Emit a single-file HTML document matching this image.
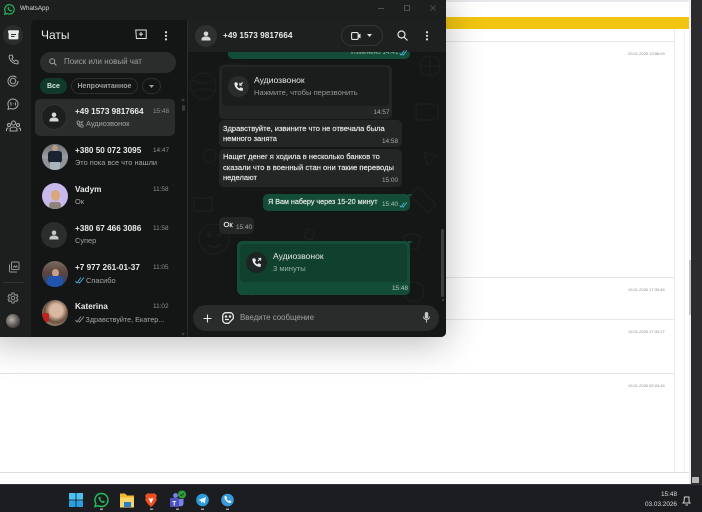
<!DOCTYPE html>
<html lang="ru"><head><meta charset="utf-8"><title>WhatsApp</title>
<style>
*{box-sizing:border-box}
html,body{margin:0;padding:0;width:702px;height:512px;overflow:hidden;background:#fff;font-family:"Liberation Sans","Noto Sans CJK SC",sans-serif}
.a{position:absolute}
.t{position:absolute;white-space:nowrap;line-height:1}
svg{position:absolute;overflow:visible}
.name{font-size:8.2px;font-weight:bold;color:#e9eaea}
.time{font-size:6.4px;color:#8f9292}
.sub{font-size:7.4px;color:#a3a6a6}
.msg{font-size:7.5px;color:#eceded;-webkit-text-stroke:.15px #eceded}
.bub{position:absolute;background:#242525;border-radius:5px}
.out{position:absolute;background:#144d37;border-radius:5px}
.av{position:absolute;width:26px;height:26px;border-radius:50%;overflow:hidden}
</style></head><body>

<!-- background page -->
<div class="a" style="left:0;top:0;width:702px;height:512px;background:#fff"></div>
<div class="a" style="left:440px;top:0;width:250px;height:2px;background:#e8e8ec"></div>
<div class="a" style="left:440px;top:17px;width:249px;height:12px;background:#f1c512"></div>
<div class="a" style="left:440px;top:41px;width:234px;height:1px;background:#e4e4ea"></div>
<div class="a" style="left:674px;top:29px;width:1px;height:443px;background:#ececf0"></div>
<div class="a" style="left:684px;top:29px;width:1px;height:443px;background:#f0f0f3"></div>
<div class="t" style="left:628px;top:52px;font-size:4px;color:#8a8a92">20.01.2026 13:58:09</div>
<div class="a" style="left:440px;top:277px;width:234px;height:1px;background:#e4e4ea"></div>
<div class="t" style="left:628px;top:288px;font-size:4px;color:#8a8a92">19.01.2026 17:30:45</div>
<div class="a" style="left:440px;top:319px;width:234px;height:1px;background:#e8e8ec"></div>
<div class="t" style="left:628px;top:330px;font-size:4px;color:#8a8a92">19.01.2026 17:30:27</div>
<div class="a" style="left:0;top:373px;width:674px;height:1px;background:#e4e4ea"></div>
<div class="t" style="left:628px;top:384px;font-size:4px;color:#8a8a92">19.01.2026 09:24:34</div>
<div class="a" style="left:0;top:472px;width:690px;height:1px;background:#dedee0"></div>
<div class="a" style="left:688.500px;top:0;width:2px;height:484px;background:#f0f0f2"></div>
<div class="a" style="left:688.500px;top:260px;width:2px;height:55px;background:#c4c4cc"></div>
<div class="a" style="left:690.500px;top:0;width:11.500px;height:484px;background:#2c2c2e"></div>

<!-- taskbar -->
<div class="a" style="left:0;top:484px;width:702px;height:28px;background:#1b1d20"></div>
<div class="a" style="left:0;top:484px;width:702px;height:1px;background:#333437"></div>
<svg style="left:0;top:484px" width="702" height="28" viewBox="0 484 702 28">
 <!-- windows -->
 <rect x="69" y="493" width="6.600" height="6.600" rx=".6" fill="#4cc2f2"/><rect x="76.400" y="493" width="6.600" height="6.600" rx=".6" fill="#4cc2f2"/><rect x="69" y="500.400" width="6.600" height="6.600" rx=".6" fill="#2a9fe0"/><rect x="76.400" y="500.400" width="6.600" height="6.600" rx=".6" fill="#2a9fe0"/>
 <!-- whatsapp -->
 <path d="M101.500 493.500a6.500 6.500 0 0 1 0 13 6.800 6.800 0 0 1-3.200-.8l-3.300.9.900-3.200a6.500 6.500 0 0 1 5.600-9.900z" fill="none" stroke="#25c15f" stroke-width="1.400"/>
 <path d="M99 497c-.8.8-.6 2.100.6 3.600 1.300 1.600 2.800 2.500 4 2.300.8-.2 1.400-.9 1.300-1.400l-1.700-.9-.8.8c-.9-.4-1.700-1.300-2.200-2.300l.7-.7-.7-1.700z" fill="#25c15f"/>
 <!-- folder -->
 <path d="M120 493.500h5l2 2h7v12h-14z" fill="#f2b92f"/><rect x="120" y="497.500" width="14" height="10" fill="#f8d568"/><rect x="124" y="502" width="7" height="5" fill="#2a80c8"/>
 <!-- brave -->
 <path d="M147 493.500h8l1.800 2-.6 2.500.6 2-3 4.500-2.800 2.500-2.800-2.500-3-4.500.6-2-.6-2.500z" fill="#f04f23"/>
 <path d="M148.500 498l2.500.8 2.500-.8-1 2.500-1.500 3-1.500-3z" fill="#fff"/>
 <!-- teams -->
 <circle cx="175.500" cy="495.500" r="2.400" fill="#7b83eb"/><rect x="170" y="498" width="9" height="9" rx="1" fill="#4b53bc"/><path d="M179 499h4.500v4.500a3 3 0 0 1-4.500 2.500z" fill="#7b83eb"/><text x="172.200" y="505.500" font-size="6.500" font-weight="bold" fill="#fff" font-family="Liberation Sans">T</text>
 <circle cx="182" cy="494.500" r="4" fill="#2f9e3f"/><path d="M180.300 494.500l1.200 1.200 2.200-2.200" stroke="#0e3a16" fill="none" stroke-width=".9"/>
 <!-- telegram -->
 <circle cx="202.500" cy="500" r="6.300" fill="#2b9ad8"/><path d="M198.500 500l7.500-3-1.200 6.500-2.300-1.600-1.200 1.200-.3-2z" fill="#e8f5fc"/>
 <!-- phone -->
 <circle cx="227.500" cy="500" r="6.300" fill="#3a9ae0"/><path d="M224.800 496.300c-.9 1.200.1 3.400 1.500 4.800 1.500 1.500 3.500 2.400 4.700 1.400l.4-.9-1.900-1.300-.9.700c-.9-.4-1.800-1.300-2.200-2.200l.7-.9-1.200-1.900z" fill="#fff"/>
 <!-- indicators -->
 <g fill="#9b9c9e"><rect x="100" y="508.500" width="3" height="1.500"/><rect x="150" y="508.500" width="3" height="1.500"/><rect x="176" y="508.500" width="3" height="1.500"/><rect x="201" y="508.500" width="3" height="1.500"/><rect x="226" y="508.500" width="3" height="1.500"/></g>
 <!-- notification -->
 <path d="M684.500 497h4.500v4.500l1 1.500h-7l1-1.500z" fill="none" stroke="#d0d0d0" stroke-width="1"/><path d="M685.500 505h2.500" stroke="#d0d0d0"/>
</svg>
<div class="t" style="right:25px;top:492.300px;font-size:6.400px;color:#dcdcdc">15:48</div>
<div class="t" style="right:25px;top:501.500px;font-size:6.400px;color:#dcdcdc">03.03.2026</div>
<div class="a" style="left:692px;top:477px;width:7px;height:6px;background:#b8b8b8"></div>

<!-- WhatsApp window -->
<div class="a" style="left:-10px;top:-10px;width:456px;height:347px;border-radius:0 0 6px 0;box-shadow:0 6px 36px rgba(0,0,0,.28)"></div>
<div class="a" style="left:0;top:0;width:446px;height:337px;background:#1d1f1f;border-radius:0 0 5px 0;overflow:hidden">
 <!-- list pane -->
 <div class="a" style="left:31px;top:20px;width:156px;height:317px;background:#141515;border-radius:5px 0 0 0"></div>
 <!-- chat pane -->
 <div class="a" style="left:187px;top:20px;width:259px;height:317px;background:#151616"></div>
 <div class="a" style="left:187px;top:20px;width:259px;height:32px;background:#1e2020"></div>
 <div class="a" style="left:187px;top:20px;width:1px;height:317px;background:#292b2b"></div>

 <!-- wallpaper doodles -->
 <svg style="left:188px;top:52px" width="258" height="285" viewBox="0 0 258 285" fill="none" stroke="#1f2121" stroke-width="1">
  <circle cx="15" cy="34" r="13"/><path d="M4 28c8 4 16 4 22 0M4 40c8-4 16-4 22 0"/>
  <circle cx="242" cy="14" r="10"/><path d="M232 14h20M242 4v20"/>
  <rect x="228" y="52" width="22" height="16" rx="3"/>
  <circle cx="26" cy="187" r="15"/><circle cx="21" cy="183" r="1.500"/><circle cx="31" cy="183" r="1.500"/><path d="M19 192c4 4 10 4 14 0"/>
  <path d="M230 135l18 18-8 8-18-18z"/><path d="M10 255h25v20h-25zM22 255v20"/>
  <circle cx="226" cy="240" r="10"/><path d="M190 120l6 12-12-2z"/><path d="M18 100c6-6 14 0 8 8-6 6-14 0-8-8z"/>
  <path d="M6 145c6 2 12 2 18 0v14h-18z"/><path d="M236 100l12 4-8 10z"/><path d="M60 228l10 6-6 10-10-6z"/>
  <path d="M120 176l6 4-2 8-8-2z"/><circle cx="100" cy="212" r="8"/><path d="M190 216c8-4 14 2 10 10"/>
  <circle cx="50" cy="128" r="7"/><path d="M34 70l8 8-8 8"/><path d="M40 12h14v10h-14z"/>
  <path d="M215 185c6-4 12-4 18 0l-4 12h-10z"/>
 </svg>

 <!-- title bar -->
 <svg style="left:4px;top:4px" width="11" height="11" viewBox="0 0 24 24"><path d="M12 1.500a10.300 10.300 0 0 1 0 20.600 10.500 10.500 0 0 1-5-1.300l-5.500 1.500 1.500-5.300a10.300 10.300 0 0 1 9-15.500z" fill="none" stroke="#25c15f" stroke-width="2.400"/><path d="M8.500 6.800c-1.300 1.300-1 3.600 1 6 2 2.400 4.600 3.800 6.300 3.300 1.100-.3 1.800-1.300 1.700-2.100l-2.500-1.400-1.100 1.100c-1.300-.6-2.600-1.900-3.300-3.300l1-1.100-1.100-2.500z" fill="#25c15f"/></svg>
 <div class="t" style="left:20px;top:6px;font-size:6.300px;color:#dcdede">WhatsApp</div>
 <div class="a" style="left:378px;top:7.500px;width:6px;height:1px;background:#4e5050"></div>
 <div class="a" style="left:404px;top:5px;width:6px;height:6px;border:1px solid #4e5050"></div>
 <svg style="left:430px;top:5px" width="6" height="6" viewBox="0 0 7 7"><path d="M.5.500l6 6M6.500.500l-6 6" stroke="#4e5050"/></svg>

 <!-- rail -->
 <div class="a" style="left:3px;top:25px;width:20px;height:20px;border-radius:50%;background:#2b2d2d"></div>
 <svg style="left:8px;top:30px" width="11" height="10" viewBox="0 0 11 10"><path d="M0 1.500a1.200 1.200 0 0 1 1.200-1.200h8.600a1.200 1.200 0 0 1 1.200 1.200v1.300h-.6v5.400a1.200 1.200 0 0 1-1.200 1.200h-7.400a1.200 1.200 0 0 1-1.200-1.200v-5.400h-.6z" fill="#e8e9e9"/><path d="M3 4.500h5M3 6.500h3.500" stroke="#2b2d2d"/></svg>
 <svg style="left:8px;top:54px" width="11" height="11" viewBox="0 0 24 24"><path d="M5 2.500l4 0 2 5.500-2.500 2.500c1 2.500 3 4.500 5.500 5.500l2.500-2.500 5.500 2v4c0 1.500-1 2-2 2C10.500 21.500 2.500 13.500 2.500 5c0-1.500 1-2.500 2.500-2.500z" fill="none" stroke="#a5a8a8" stroke-width="2.200"/></svg>
 <svg style="left:7px;top:75px" width="12" height="12" viewBox="0 0 24 24" fill="none" stroke="#a5a8a8" stroke-width="2"><circle cx="12" cy="12" r="5.500"/><path d="M22 12a10 10 0 1 1-3-7"/></svg>
 <svg style="left:7px;top:98px" width="12" height="12" viewBox="0 0 24 24" fill="none" stroke="#a5a8a8" stroke-width="2"><path d="M12 2a10 10 0 0 1 0 20 10 10 0 0 1-4.500-1l-5.500 1.500 1.500-5a10 10 0 0 1 8.500-15.500z"/><path d="M8 9l-1.500 1.500M8 9v6M17 9v6M12 11.500h1"/></svg>
 <svg style="left:6px;top:120px" width="15" height="12" viewBox="0 0 30 24" fill="none" stroke="#a5a8a8" stroke-width="2.200"><circle cx="15" cy="6" r="4"/><circle cx="6" cy="10" r="3"/><circle cx="24" cy="10" r="3"/><path d="M8 22v-3c0-3 3-5 7-5s7 2 7 5v3zM1 22v-3c0-2 2-3 4-3M29 22v-3c0-2-2-3-4-3"/></svg>
 <svg style="left:8px;top:261px" width="12" height="12" viewBox="0 0 24 24" fill="none" stroke="#929595" stroke-width="2"><rect x="7" y="2" width="15" height="15" rx="2"/><path d="M3 7v13a2 2 0 0 0 2 2h13"/><path d="M10 13l3-3 2 2 2-2 2 3"/></svg>
 <div class="a" style="left:3px;top:282px;width:21px;height:1px;background:#333535"></div>
 <svg style="left:7px;top:292px" width="12" height="12" viewBox="0 0 24 24" fill="none" stroke="#929595" stroke-width="2"><circle cx="12" cy="12" r="3.500"/><path d="M10 2h4l.6 3 2.400 1.300 2.900-1 2 3.500-2.300 2v2.400l2.300 2-2 3.500-2.900-1-2.400 1.300-.6 3h-4l-.6-3-2.400-1.300-2.900 1-2-3.500 2.300-2v-2.400l-2.300-2 2-3.500 2.900 1 2.400-1.300z"/></svg>
 <div class="a" style="left:6px;top:314px;width:14px;height:14px;border-radius:50%;background:radial-gradient(circle at 40% 40%,#b9b4b0,#5b5552 55%,#2a2829)"></div>

 <!-- list header -->
 <div class="t" style="left:41px;top:29px;font-size:12px;color:#e9eaea">Чаты</div>
 <svg style="left:135px;top:29px" width="12" height="11" viewBox="0 0 12 11" fill="none" stroke="#e3e4e4" stroke-width="1"><path d="M.800 1h10.400v8.500h-9.800z"/><path d="M6 3v4.200M3.900 5.100h4.200"/></svg>
 <svg style="left:164px;top:31px" width="4" height="10" viewBox="0 0 4 10" fill="#e3e4e4"><circle cx="2" cy="1.200" r="1.100"/><circle cx="2" cy="4.800" r="1.100"/><circle cx="2" cy="8.400" r="1.100"/></svg>
 <!-- search -->
 <div class="a" style="left:40px;top:52px;width:136px;height:21px;border-radius:11px;background:#2b2d2d"></div>
 <svg style="left:49px;top:58px" width="8" height="8" viewBox="0 0 8 8" fill="none" stroke="#9fa2a2" stroke-width="1"><circle cx="3.200" cy="3.200" r="2.500"/><path d="M5 5l2.500 2.500"/></svg>
 <div class="t" style="left:64px;top:58px;font-size:8px;color:#9da0a0">Поиск или новый чат</div>
 <!-- filters -->
 <div class="a" style="left:40px;top:78px;width:27px;height:16px;border-radius:8px;background:#123a2c"></div>
 <div class="t" style="left:47px;top:82.500px;font-size:7px;font-weight:bold;color:#cfeadb">Все</div>
 <div class="a" style="left:71px;top:78px;width:67px;height:16px;border-radius:8px;border:1px solid #2d2f2f"></div>
 <div class="t" style="left:77.500px;top:82.500px;font-size:7px;font-weight:bold;color:#9da0a0">Непрочитанное</div>
 <div class="a" style="left:142px;top:78px;width:19px;height:16px;border-radius:8px;border:1px solid #2d2f2f"></div>
 <svg style="left:149px;top:85px" width="5" height="3" viewBox="0 0 5 3"><path d="M0 0h5l-2.500 3z" fill="#9da0a0"/></svg>
 <!-- list scrollbar -->
 <div class="a" style="left:181.500px;top:105px;width:3px;height:6px;border-radius:2px;background:#3b3d3d"></div>
 <svg style="left:181px;top:98px" width="4" height="3" viewBox="0 0 4 3"><path d="M2 0l2 3h-4z" fill="#3a3c3c"/></svg>

 <!-- row 1 -->
 <div class="a" style="left:35px;top:99px;width:140px;height:37px;border-radius:5px;background:#2b2d2d"></div>
 <div class="av" style="left:41px;top:104px;background:#1d1f1f;border:1px solid #333535"></div>
 <svg style="left:49px;top:112px" width="10" height="10" viewBox="0 0 10 10" fill="#d5d6d6"><circle cx="5" cy="2.800" r="2.300"/><path d="M.5 9.500v-1.200c0-1.800 2-2.800 4.500-2.800s4.500 1 4.500 2.800v1.200z"/></svg>
 <div class="t name" style="left:75px;top:107.500px">+49 1573 9817664</div>
 <div class="t time" style="left:153px;top:108.500px">15:48</div>
 <svg style="left:76px;top:120px" width="8" height="8" viewBox="0 0 24 24" fill="none" stroke="#9da0a0" stroke-width="2.500"><path d="M5 3h4l2 5-2.500 2.500c1 2.500 3 4.500 5.500 5.500l2.500-2.500 5 2v4c0 1-1 2-2 2C10.500 21.500 3 14 3 5c0-1 1-2 2-2z"/><path d="M21 3l-6 6M15 4v5h5"/></svg>
 <div class="t sub" style="left:86px;top:120px">Аудиозвонок</div>

 <!-- row 2 -->
 <div class="av" style="left:41.500px;top:144px;background:#8f9498">
  <div class="a" style="left:0;top:0;width:26px;height:14px;background:linear-gradient(#6e7276,#9ca0a4)"></div>
  <div class="a" style="left:10px;top:1px;width:6px;height:6px;border-radius:50%;background:#b99a82"></div>
  <div class="a" style="left:6px;top:7px;width:14px;height:12px;background:#1b2330;border-radius:3px"></div>
  <div class="a" style="left:8px;top:18px;width:10px;height:9px;background:#a9b4bc"></div>
 </div>
 <div class="t name" style="left:75px;top:146.500px">+380 50 072 3095</div>
 <div class="t time" style="left:153px;top:147.500px">14:47</div>
 <div class="t sub" style="left:75px;top:159px">Это пока все что нашли</div>

 <!-- row 3 -->
 <div class="av" style="left:41.500px;top:183px;background:#c9b8ec">
  <div class="a" style="left:9px;top:7px;width:9px;height:11px;border-radius:50%;background:#d8a878"></div>
  <div class="a" style="left:7px;top:19px;width:12px;height:7px;background:#8c8478;border-radius:3px 3px 0 0"></div>
 </div>
 <div class="t name" style="left:75px;top:186px">Vadym</div>
 <div class="t time" style="left:153px;top:187px">11:58</div>
 <div class="t sub" style="left:75px;top:198px">Ок</div>

 <!-- row 4 -->
 <div class="av" style="left:41px;top:222px;background:#2b2d2d"></div>
 <svg style="left:49px;top:230px" width="10" height="10" viewBox="0 0 10 10" fill="#c5c7c7"><circle cx="5" cy="2.800" r="2.300"/><path d="M.5 9.500v-1.200c0-1.800 2-2.800 4.500-2.800s4.500 1 4.500 2.800v1.200z"/></svg>
 <div class="t name" style="left:75px;top:225px">+380 67 466 3086</div>
 <div class="t time" style="left:153px;top:226px">11:58</div>
 <div class="t sub" style="left:75px;top:237px">Супер</div>

 <!-- row 5 -->
 <div class="av" style="left:41.500px;top:261px;background:linear-gradient(#7a6a5e,#5a4540 45%,#2a3f78)">
  <div class="a" style="left:10px;top:8px;width:7px;height:8px;border-radius:50%;background:#c9a08c"></div>
  <div class="a" style="left:5px;top:15px;width:16px;height:11px;background:#1f55ae;border-radius:4px 4px 0 0"></div>
 </div>
 <div class="t name" style="left:75px;top:264px">+7 977 261-01-37</div>
 <div class="t time" style="left:153px;top:265px">11:05</div>
 <svg style="left:75px;top:277px" width="10" height="7" viewBox="0 0 10 7" fill="none" stroke="#53bdeb" stroke-width=".8"><path d="M.5 4l1.500 2 4-5.500M3.500 5l1 1 4.500-5.500"/></svg>
 <div class="t sub" style="left:86px;top:277px">Спасибо</div>

 <!-- row 6 -->
 <div class="av" style="left:41.500px;top:300px;background:radial-gradient(circle at 55% 40%,#d8b8a0 0 30%,#6a5040 55%,#c9c0a8)">
  <div class="a" style="left:0;top:13px;width:7px;height:9px;background:#c02020;border-radius:2px"></div>
 </div>
 <div class="t name" style="left:75px;top:303px">Katerina</div>
 <div class="t time" style="left:153px;top:304px">11:02</div>
 <svg style="left:75px;top:316px" width="10" height="7" viewBox="0 0 10 7" fill="none" stroke="#9da0a0" stroke-width=".8"><path d="M.5 4l1.500 2 4-5.500M3.500 5l1 1 4.500-5.500"/></svg>
 <div class="t sub" style="left:85.500px;top:316px;font-size:7.200px">Здравствуйте, Екатер...</div>
 <svg style="left:181px;top:333px" width="4" height="3" viewBox="0 0 4 3"><path d="M0 0h4l-2 3z" fill="#3a3c3c"/></svg>

 <!-- chat header -->
 <div class="av" style="left:195px;top:25px;width:22px;height:22px;background:#2f3131"></div>
 <svg style="left:201px;top:31px" width="10" height="10" viewBox="0 0 10 10" fill="#d5d6d6"><circle cx="5" cy="2.800" r="2.300"/><path d="M.5 9.500v-1.200c0-1.800 2-2.800 4.500-2.800s4.500 1 4.500 2.800v1.200z"/></svg>
 <div class="t name" style="left:223px;top:31px;font-size:8.300px">+49 1573 9817664</div>
 <div class="a" style="left:341px;top:25px;width:42px;height:21px;border-radius:11px;border:1px solid #343636"></div>
 <svg style="left:351px;top:32px" width="10" height="8" viewBox="0 0 10 8"><rect x=".6" y=".6" width="6.500" height="6.800" rx="1" fill="none" stroke="#e3e4e4" stroke-width="1.100"/><path d="M7 3l2.500-1.500v5l-2.500-1.500z" fill="#e3e4e4"/></svg>
 <svg style="left:367px;top:34px" width="5" height="3" viewBox="0 0 5 3"><path d="M0 0h5l-2.500 3z" fill="#e3e4e4"/></svg>
 <svg style="left:397px;top:30px" width="11" height="11" viewBox="0 0 11 11" fill="none" stroke="#e3e4e4" stroke-width="1.200"><circle cx="4.500" cy="4.500" r="3.500"/><path d="M7 7l3.500 3.500"/></svg>
 <svg style="left:425px;top:31px" width="4" height="10" viewBox="0 0 4 10" fill="#e3e4e4"><circle cx="2" cy="1.200" r="1.100"/><circle cx="2" cy="4.800" r="1.100"/><circle cx="2" cy="8.400" r="1.100"/></svg>

 <!-- messages -->
 <div class="a" style="left:187px;top:52px;width:259px;height:285px;overflow:hidden">
  <div class="out" style="left:41px;top:-12px;width:182px;height:19px"></div>
  <div class="t" style="left:164px;top:-2px;font-size:6.400px;color:#8fb5a4">Изменено 14:41</div>
 </div>
 <svg style="left:399px;top:50px" width="9" height="6" viewBox="0 0 10 7" fill="none" stroke="#53bdeb" stroke-width=".9"><path d="M.5 4l1.500 2 4-5.500M3.500 5l1 1 4.500-5.500"/></svg>

 <div class="bub" style="left:219px;top:65px;width:173px;height:54px"></div>
 <div class="a" style="left:222px;top:67px;width:167px;height:39px;border-radius:4px;background:#1b1c1c"></div>
 <div class="a" style="left:228px;top:76px;width:21px;height:21px;border-radius:50%;background:#2a2c2c"></div>
 <svg style="left:233px;top:81px" width="11" height="11" viewBox="0 0 24 24"><path d="M5 3h4l2 5-2.500 2.500c1 2.500 3 4.500 5.500 5.500l2.500-2.500 5 2v4c0 1-1 2-2 2C10.500 21.500 3 14 3 5c0-1 1-2 2-2z" fill="#e8e9e9"/><path d="M21 3l-6 6M15 4v5h5" fill="none" stroke="#e8e9e9" stroke-width="2.300"/></svg>
 <div class="t" style="left:254px;top:76px;font-size:8.600px;color:#e6e7e7">Аудиозвонок</div>
 <div class="t" style="left:254px;top:88.500px;font-size:7.600px;color:#969999">Нажмите, чтобы перезвонить</div>
 <div class="t time" style="left:373.500px;top:110px;color:#a8abab">14:57</div>

 <div class="bub" style="left:219px;top:120px;width:183px;height:27px"></div>
 <div class="t msg" style="left:223px;top:124.500px">Здравствуйте, извините что не отвечала была</div>
 <div class="t msg" style="left:223px;top:135px">немного занята</div>
 <div class="t time" style="left:382px;top:139px;color:#a8abab">14:58</div>

 <div class="bub" style="left:219px;top:149px;width:183px;height:38px"></div>
 <div class="t msg" style="left:223px;top:153px">Нащет денег я ходила в несколько банков то</div>
 <div class="t msg" style="left:223px;top:163.500px;font-size:7.600px">сказали что в военный стан они такие переводы</div>
 <div class="t msg" style="left:223px;top:174px">неделают</div>
 <div class="t time" style="left:382px;top:178px;color:#a8abab">15:00</div>

 <div class="out" style="left:263px;top:194px;width:147px;height:17px"></div>
 <svg style="left:408px;top:194px" width="5" height="4" viewBox="0 0 5 4"><path d="M0 0h5l-5 4z" fill="#144d37"/></svg>
 <div class="t msg" style="left:268px;top:198px;color:#e8f0ec;font-size:7.200px">Я Вам наберу через 15-20 минут</div>
 <div class="t time" style="left:382px;top:201.500px;color:#a9c6b9">15:40</div>
 <svg style="left:399px;top:202px" width="9" height="6" viewBox="0 0 10 7" fill="none" stroke="#53bdeb" stroke-width=".9"><path d="M.5 4l1.500 2 4-5.500M3.500 5l1 1 4.500-5.500"/></svg>

 <div class="bub" style="left:219px;top:217px;width:35px;height:17px"></div>
 <div class="t msg" style="left:223.500px;top:221px">Ок</div>
 <div class="t time" style="left:236px;top:225px;color:#a8abab">15:40</div>

 <div class="out" style="left:237px;top:241px;width:173px;height:54px"></div>
 <svg style="left:408px;top:241px" width="5" height="4" viewBox="0 0 5 4"><path d="M0 0h5l-5 4z" fill="#144d37"/></svg>
 <div class="a" style="left:240px;top:244px;width:167px;height:38px;border-radius:4px;background:#10402e"></div>
 <div class="a" style="left:246px;top:252px;width:21px;height:21px;border-radius:50%;background:#1c2523"></div>
 <svg style="left:251px;top:257px" width="11" height="11" viewBox="0 0 24 24"><path d="M5 3h4l2 5-2.500 2.500c1 2.500 3 4.500 5.500 5.500l2.500-2.500 5 2v4c0 1-1 2-2 2C10.500 21.500 3 14 3 5c0-1 1-2 2-2z" fill="#e8e9e9"/><path d="M15 9l6-6M16 3h5v5" fill="none" stroke="#e8e9e9" stroke-width="2.300"/></svg>
 <div class="t" style="left:273px;top:252px;font-size:8.600px;color:#e6e7e7">Аудиозвонок</div>
 <div class="t" style="left:273px;top:264.500px;font-size:7.600px;color:#98b3a7">3 минуты</div>
 <div class="t time" style="left:392px;top:286px;color:#b4cbc1">15:48</div>

 <!-- chat scrollbar -->
 <div class="a" style="left:441px;top:229px;width:3px;height:68px;border-radius:2px;background:#3d3f3f"></div>
 <div class="a" style="left:441.500px;top:299px;width:2px;height:2px;background:#3d3f3f"></div>

 <!-- composer -->
 <div class="a" style="left:193px;top:305px;width:246px;height:26px;border-radius:13px;background:#2a2c2c"></div>
 <svg style="left:202.500px;top:313.500px" width="9" height="9" viewBox="0 0 9 9"><path d="M4.500.500v8M.500 4.500h8" stroke="#e6e7e7" stroke-width="1.100"/></svg>
 <svg style="left:221.500px;top:312px" width="12" height="12" viewBox="0 0 12 12" fill="none" stroke="#e6e7e7" stroke-width="1.300"><path d="M4 .7h4a3.300 3.300 0 0 1 3.300 3.300v2.500l-4.800 4.800h-2.500a3.300 3.300 0 0 1-3.300-3.300v-4a3.300 3.300 0 0 1 3.300-3.300z"/><circle cx="4" cy="4.500" r=".6" fill="#e6e7e7"/><circle cx="8" cy="4.500" r=".6" fill="#e6e7e7"/><path d="M3 7.500h4"/></svg>
 <div class="t" style="left:240px;top:314px;font-size:7.900px;color:#9da0a0">Введите сообщение</div>
 <svg style="left:422.500px;top:312px" width="7" height="11" viewBox="0 0 7 11"><rect x="1.800" y="0" width="3.400" height="6.500" rx="1.700" fill="#c5c7c7"/><path d="M.5 4.500a3 3 0 0 0 6 0M3.500 7.500v3" fill="none" stroke="#c5c7c7"/></svg>
</div>
</body></html>
